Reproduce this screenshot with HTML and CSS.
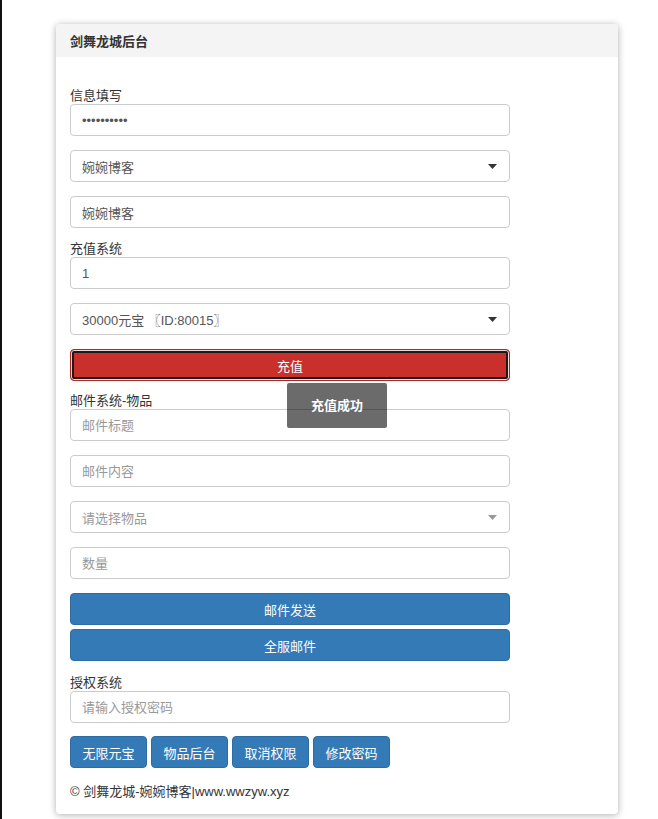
FILE: index.html
```html
<!DOCTYPE html>
<html lang="zh-CN">
<head>
<meta charset="utf-8">
<title>剑舞龙城后台</title>
<link rel="stylesheet" href="styles.css">
</head>
<body>
<div class="card">
  <div class="card-head">剑舞龙城后台</div>
  <div class="card-body">
    <div class="form">
      <div class="label">信息填写</div>
      <input class="field" type="password" value="wwzywxyz12">
      <div class="field select gap"><span>婉婉博客</span><svg class="caret" width="9" height="5" viewBox="0 0 9 5"><path d="M0 0H9L4.5 5Z" fill="#333"/></svg></div>
      <input class="field gap" type="text" value="婉婉博客">
      <div class="label sec">充值系统</div>
      <input class="field" type="text" value="1">
      <div class="field select gap"><span>30000元宝 〖ID:80015〗</span><svg class="caret" width="9" height="5" viewBox="0 0 9 5"><path d="M0 0H9L4.5 5Z" fill="#333"/></svg></div>
      <button class="btn btn-danger block gap">充值</button>
      <div class="label sec2">邮件系统-物品</div>
      <input class="field" type="text" placeholder="邮件标题">
      <input class="field gap" type="text" placeholder="邮件内容">
      <div class="field select gap placeholder"><span>请选择物品</span><svg class="caret" width="9" height="5" viewBox="0 0 9 5"><path d="M0 0H9L4.5 5Z" fill="#999"/></svg></div>
      <input class="field gap" type="text" placeholder="数量">
      <button class="btn btn-primary block gap">邮件发送</button>
      <button class="btn btn-primary block gap4">全服邮件</button>
      <div class="label sec3">授权系统</div>
      <input class="field" type="text" placeholder="请输入授权密码">
      <div class="btn-row">
        <button class="btn btn-primary">无限元宝</button>
        <button class="btn btn-primary">物品后台</button>
        <button class="btn btn-primary">取消权限</button>
        <button class="btn btn-primary">修改密码</button>
      </div>
      <div class="footer">© 剑舞龙城-婉婉博客|www.wwzyw.xyz</div>
    </div>
  </div>
</div>
<div class="toast">充值成功</div>
</body>
</html>
```

FILE: styles.css
```css
html { background: #fff; }
body {
  margin: 0;
  min-height: 819px;
  border-left: 2px solid #111;
  font-family: "Liberation Sans", "Noto Sans CJK SC", sans-serif;
  font-size: 13px;
  color: #333;
  position: relative;
  overflow: hidden;
}
.card {
  margin: 24px 0 0 54px;
  width: 562px;
  background: #fff;
  border-radius: 4px;
  box-shadow: 0 1px 7px rgba(0,0,0,0.32);
  overflow: hidden;
}
.card-head {
  height: 33px;
  line-height: 35px;
  padding: 0 14px;
  background: #f4f4f4;
  font-weight: bold;
  color: #333;
}
.card-body {
  padding: 31px 14px 14px;
}
.form {
  width: 440px;
  display: flex;
  flex-direction: column;
}
.label {
  height: 16px;
  line-height: 16px;
  color: #333;
}
.label.sec { margin-top: 13px; }
.label.sec2 { margin-top: 12px; }
.label.sec3 { margin-top: 14px; }
.field {
  box-sizing: border-box;
  height: 32px;
  width: 440px;
  border: 1px solid #ccc;
  border-radius: 4px;
  padding: 0 11px;
  font-family: inherit;
  font-size: 13px;
  color: #555;
  background: #fff;
  outline: none;
  margin: 0;
}
.field::placeholder { color: #999; }
.select {
  display: flex;
  align-items: center;
  justify-content: space-between;
  padding-right: 12px;
}
.select.placeholder { color: #999; }
.caret { display: block; }
.btn {
  box-sizing: border-box;
  height: 32px;
  border: 1px solid transparent;
  border-radius: 4px;
  font-family: inherit;
  font-size: 13px;
  color: #fff;
  padding: 0 12px;
  margin: 0;
  cursor: pointer;
}
.block { width: 440px; }
.btn-primary {
  background: #337ab7;
  border-color: #2e6da4;
}
.btn-danger {
  background: #c9302c;
  border-color: #ac2925;
  box-shadow: inset 0 0 0 1px #f3d6d5, inset 0 0 0 3px #1a1a1a;
}
.form .gap { margin-top: 14px; }
.form .gap4 { margin-top: 4px; }
.btn-row {
  margin-top: 13px;
  display: flex;
  gap: 4px;
}
.btn-row .btn { width: 77px; padding: 0; }
.footer {
  margin-top: 16px;
  height: 16px;
  line-height: 16px;
  color: #333;
}
.toast {
  position: absolute;
  left: 285px;
  top: 383px;
  width: 100px;
  height: 45px;
  line-height: 45px;
  text-align: center;
  background: rgba(0,0,0,0.58);
  color: #fff;
  font-weight: bold;
  border-radius: 2px;
}
```
